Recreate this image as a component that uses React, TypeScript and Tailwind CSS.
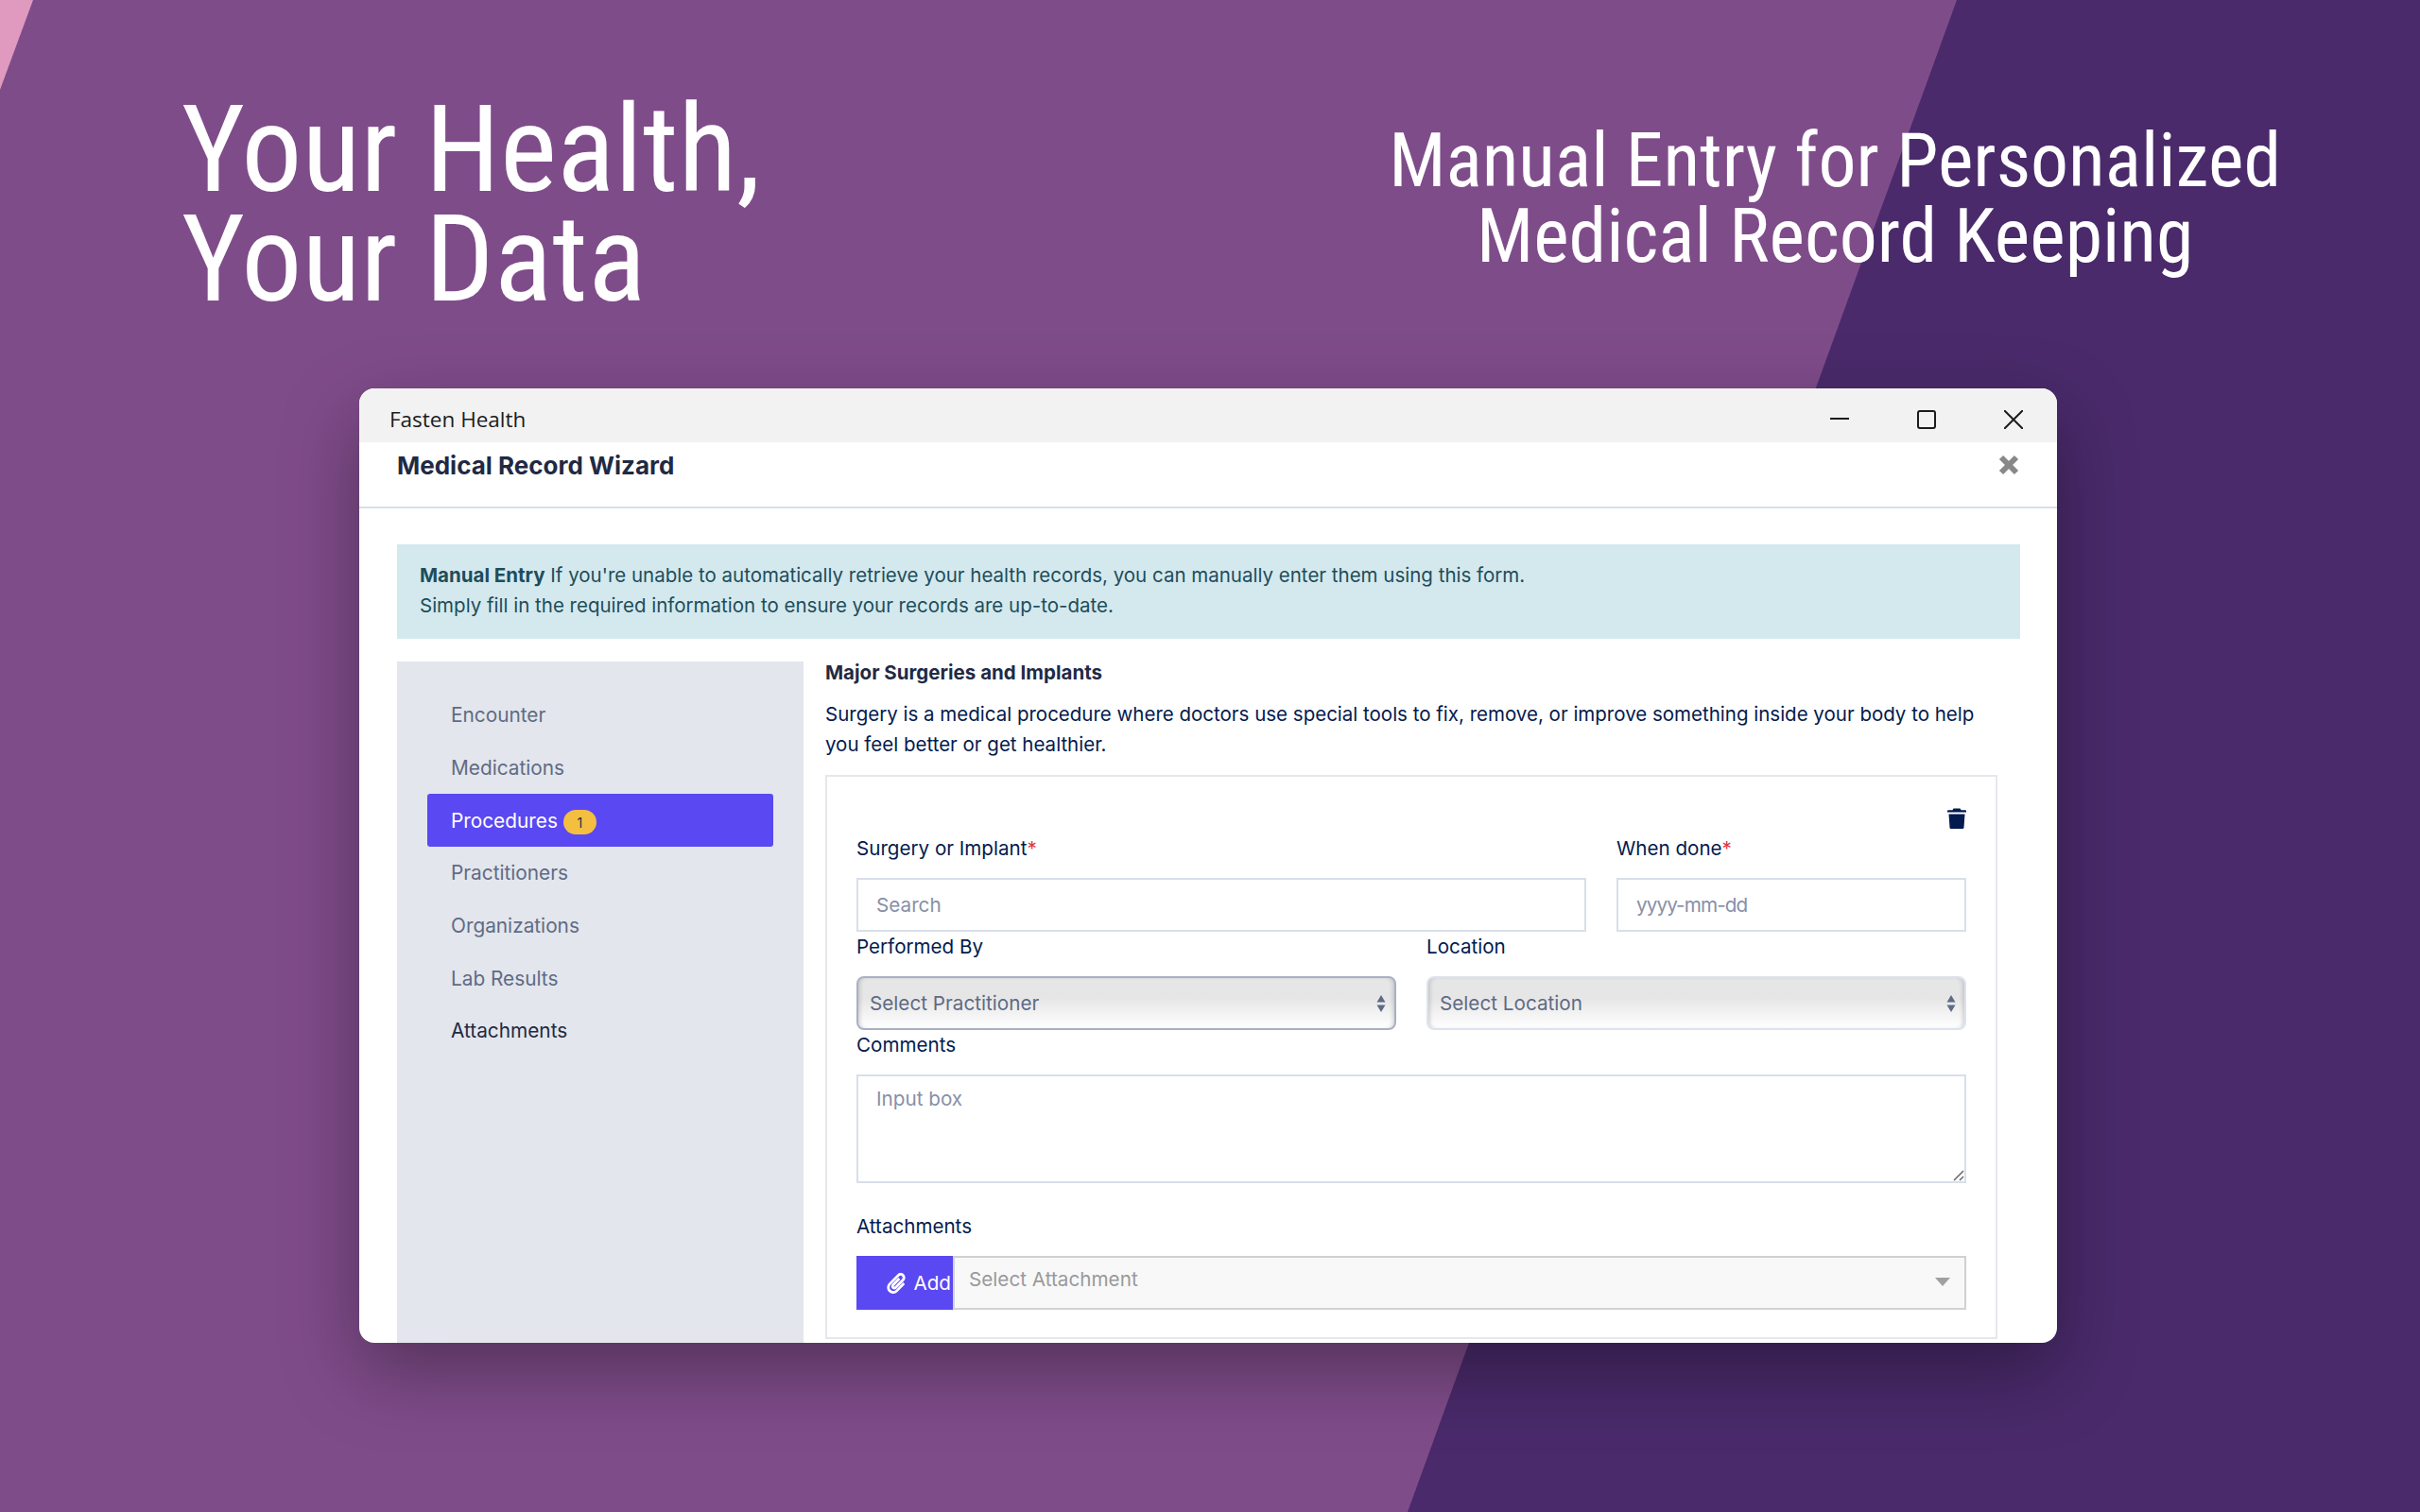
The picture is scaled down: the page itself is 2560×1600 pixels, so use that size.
import { FaPaperclip } from 'react-icons/fa'

const sidebarItems = [
  { label: 'Encounter', color: 'text-[#5f6b85]' },
  { label: 'Medications', color: 'text-[#5f6b85]' },
  { label: 'Procedures', color: 'text-white', active: true },
  { label: 'Practitioners', color: 'text-[#5f6b85]' },
  { label: 'Organizations', color: 'text-[#5f6b85]' },
  { label: 'Lab Results', color: 'text-[#5f6b85]' },
  { label: 'Attachments', color: 'text-[#1f2a44]' },
]

function Required() {
  return <span className="text-[#dc3545]">*</span>
}

function Label({ children, className = '' }: { children: React.ReactNode; className?: string }) {
  return <div className={`h-[47px] text-[20.6px] leading-[32px] text-[#031b4e] ${className}`}>{children}</div>
}

function SelectBox({ text, dark }: { text: string; dark?: boolean }) {
  return (
    <div
      className={`flex h-[57px] items-center justify-between rounded-[8px] border-2 bg-gradient-to-b from-[#e6e6e6] from-40% to-white pl-[12px] pr-[8px] text-[20.7px] text-[#5f6b85] shadow-[inset_4px_0_5px_-3px_rgba(0,0,0,0.2),inset_-4px_0_5px_-3px_rgba(0,0,0,0.2)] ${dark ? 'border-[#a9b0c4]' : 'border-[#dde2ee]'}`}
    >
      <span>{text}</span>
      <svg width="12" height="20" viewBox="0 0 12 20" className="fill-[#5f6b85]">
        <path d="M6 1l4.500 7.500h-9zM6 19L1.500 11.500h9z" />
      </svg>
    </div>
  )
}

export default function App() {
  return (
    <div className="relative flex h-[1600px] w-[2560px] flex-col overflow-hidden bg-[#7f4c8a] font-['Inter',sans-serif]">
      {/* Background shapes */}
      <div className="absolute inset-0 bg-[#4a2a6b] [clip-path:polygon(2070px_0,2560px_0,2560px_1600px,1489px_1600px)]" />
      <div className="absolute inset-0 bg-[#e09ac0] [clip-path:polygon(0_0,35px_0,0_95px)]" />

      {/* Headings */}
      <div className="relative flex h-[411px] shrink-0 items-start justify-between font-['Roboto',sans-serif] font-normal text-white [font-stretch:75%]">
        <h1 className="ml-[192px] mt-[100px] text-[128px] leading-[116px] whitespace-nowrap">
          Your Health,
          <br />
          Your Data
        </h1>
        <h2 className="mr-[147px] mt-[130px] text-center text-[79.8px] leading-[80px] whitespace-nowrap">
          Manual Entry for Personalized
          <br />
          Medical Record Keeping
        </h2>
      </div>

      {/* Window */}
      <div className="relative ml-[380px] flex h-[1010px] w-[1796px] flex-col overflow-hidden rounded-[16px] bg-white shadow-[0_30px_80px_rgba(0,0,0,0.35)]">
        <div className="flex h-[57px] shrink-0 items-center justify-between bg-[#f2f2f2] pl-[32px] pr-[36px] pt-[8px]">
          <span className="text-[22.5px] text-[#1c1c1c] font-['Open_Sans',sans-serif]">Fasten Health</span>
          <div className="flex items-center gap-[72px]">
            <svg width="20" height="20" viewBox="0 0 20 20" className="stroke-[#1c1c1c]" fill="none" strokeWidth="2">
              <path d="M0 9h20" />
            </svg>
            <svg width="20" height="20" viewBox="0 0 20 20" className="stroke-[#1c1c1c]" fill="none" strokeWidth="2">
              <rect x="1" y="1" width="18" height="18" rx="2" />
            </svg>
            <svg width="20" height="20" viewBox="0 0 20 20" className="stroke-[#1c1c1c]" fill="none" strokeWidth="2">
              <path d="M0 0l20 20M20 0L0 20" />
            </svg>
          </div>
        </div>

        <div className="flex h-[70px] shrink-0 items-start justify-between border-b-2 border-[#d8dfea] pl-[40px] pr-[40px]">
          <h3 className="mt-[5px] text-[26px] font-bold leading-[40px] text-[#1f2a44]">Medical Record Wizard</h3>
          <svg width="22" height="22" viewBox="0 0 22 22" className="mt-[13px] stroke-[#888]" fill="none" strokeWidth="6">
            <path d="M3 3l16 16M19 3L3 19" />
          </svg>
        </div>

        <div className="flex min-h-0 flex-1 flex-col pl-[40px] pr-[39px] pt-[38px]">
          <div className="h-[100px] shrink-0 bg-[#d4e9ee] px-[24px] py-[17px] text-[20.5px] leading-[32px] text-[#1e4d5a]">
            <strong className="font-bold">Manual Entry</strong> If you're unable to automatically retrieve your health
            records, you can manually enter them using this form.
            <br />
            Simply fill in the required information to ensure your records are up-to-date.
          </div>

          <div className="mt-[24px] flex min-h-0 flex-1 gap-[23px]">
            <div className="w-[430px] shrink-0 bg-[#e3e6ec] px-[32px] pt-[29px]">
              {sidebarItems.map(item => (
                <div
                  key={item.label}
                  className={`flex h-[55.67px] items-center gap-[6px] rounded-[3px] px-[25px] text-[20.8px] ${item.color} ${item.active ? 'bg-[#5a48f2]' : ''}`}
                >
                  {item.label}
                  {item.active && (
                    <span className="mt-[4px] flex h-[26px] w-[35px] items-center justify-center rounded-full bg-[#f4bf40] text-[14px] text-[#1f2a44]">
                      1
                    </span>
                  )}
                </div>
              ))}
            </div>

            <div className="min-w-0 flex-1 pr-[24px]">
              <h4 className="text-[20.5px] font-bold leading-[24px] text-[#1f2a44]">Major Surgeries and Implants</h4>
              <p className="mt-[16px] text-[20.5px] leading-[32px] text-[#031b4e]">
                Surgery is a medical procedure where doctors use special tools to fix, remove, or improve something
                inside your body to help you feel better or get healthier.
              </p>

              <div className="mt-[16px] border-2 border-[#e5e7eb] px-[31px] pt-[33px] pb-[29px]">
                <div className="flex h-[22px] justify-end">
                  <svg width="20" height="22" viewBox="0 0 20 24" className="fill-[#031b4e]" preserveAspectRatio="none">
                    <path d="M6.500 0.500h7l1 2H19c.6 0 1 .4 1 1V5H0V3.500c0-.6.4-1 1-1h4.500zM1.500 7h17l-1 15.500c-.1.9-.8 1.500-1.500 1.500H4c-.8 0-1.400-.6-1.500-1.500z" />
                  </svg>
                </div>

                <div className="mt-[5px] flex gap-[32px]">
                  <div className="flex-1">
                    <Label>Surgery or Implant<Required /></Label>
                    <div className="flex h-[57px] items-center border-2 border-[#d8dfea] px-[19px] text-[20.7px] text-[#8790a8]">Search</div>
                  </div>
                  <div className="w-[370px]">
                    <Label>When done<Required /></Label>
                    <div className="flex h-[57px] items-center border-2 border-[#d8dfea] px-[19px] text-[20.7px] tracking-[-0.9px] text-[#8790a8]">yyyy-mm-dd</div>
                  </div>
                </div>

                <div className="flex gap-[32px]">
                  <div className="flex-1">
                    <Label>Performed By</Label>
                    <SelectBox text="Select Practitioner" dark />
                  </div>
                  <div className="flex-1">
                    <Label>Location</Label>
                    <SelectBox text="Select Location" />
                  </div>
                </div>

                <Label>Comments</Label>
                <div className="relative h-[115px] border-2 border-[#d8dfea] px-[19px] pt-[8px] text-[20.7px] leading-[32px] text-[#8790a8]">
                  Input box
                  <svg width="12" height="12" viewBox="0 0 12 12" className="absolute right-0 bottom-0 stroke-[#666]" strokeWidth="1.500">
                    <path d="M1 11L11 1M7 11l4-4" />
                  </svg>
                </div>

                <Label className="mt-[30px]">Attachments</Label>
                <div className="flex h-[57px]">
                  <div className="flex w-[102px] shrink-0 items-center justify-end gap-[7px] overflow-hidden bg-[#5a48f2] pr-[2px] text-[20.7px] text-white">
                    <FaPaperclip size={22} />
                    Add
                  </div>
                  <div className="flex flex-1 items-start justify-between border-2 border-[#d1d1d1] bg-[#f8f8f8] pl-[15px] pr-[15px] pt-[7px] text-[20.7px] text-[#9a9a9a]">
                    <span>Select Attachment</span>
                    <svg width="16" height="9" viewBox="0 0 16 9" className="mt-[14px] fill-[#a0a0a0]">
                      <path d="M0 0h16L8 9z" />
                    </svg>
                  </div>
                </div>
              </div>
            </div>
          </div>
        </div>
      </div>
    </div>
  )
}
